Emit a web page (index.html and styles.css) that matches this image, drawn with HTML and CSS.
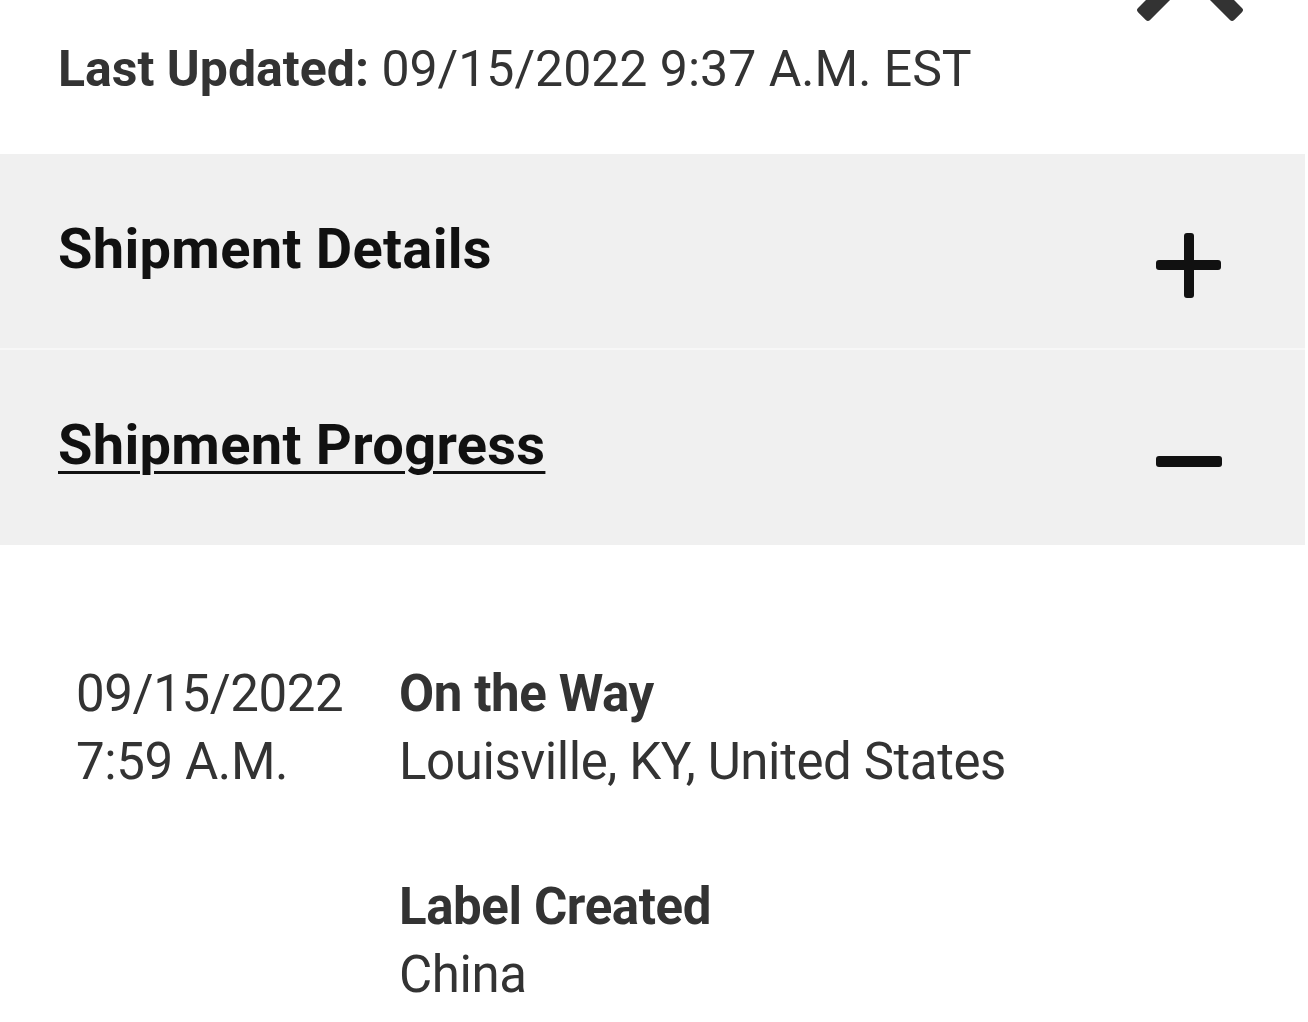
FILE: index.html
```html
<!DOCTYPE html>
<html>
<head>
    <title>Shipment Tracking</title>
    <link rel="stylesheet" href="styles.css">
</head>
<body>
    <div class="page">
        <div class="top">
            <svg class="close-icon" width="140" height="30" viewBox="1120 0 140 30">
                <rect x="-8" y="-8.5" width="76" height="17" rx="3" transform="translate(1190,-32) rotate(135)" />
                <rect x="-8" y="-8.5" width="76" height="17" rx="3" transform="translate(1190,-32) rotate(45)" />
            </svg>
            <p class="updated"><b>Last Updated:</b> 09/15/2022 9:37 A.M. EST</p>
        </div>

        <div class="accordion">
            <div class="acc-row">
                <h2 class="acc-title">Shipment Details</h2>
                <svg class="acc-icon" width="66" height="66" viewBox="0 0 66 66">
                    <rect x="28" y="0" width="10" height="65" rx="3" />
                    <rect x="0" y="27" width="65" height="10" rx="3" />
                </svg>
            </div>
            <div class="acc-row open">
                <h2 class="acc-title"><u>Shipment Progress</u></h2>
                <svg class="acc-icon" width="66" height="66" viewBox="0 0 66 66">
                    <rect x="0" y="27" width="66" height="11" rx="3" />
                </svg>
            </div>
        </div>

        <div class="progress">
            <div class="event">
                <div class="when">09/15/2022<br>7:59 A.M.</div>
                <div class="what">
                    <div class="status">On the Way</div>
                    <div>Louisville, KY, United States</div>
                </div>
            </div>
            <div class="event">
                <div class="when"></div>
                <div class="what">
                    <div class="status">Label Created</div>
                    <div>China</div>
                </div>
            </div>
        </div>
    </div>
</body>
</html>
```

FILE: styles.css
```css
body {
    margin: 0;
    background: #fff;
    font-family: Roboto, "Noto Sans", sans-serif;
    color: #333;
}
.page {
    width: 1305px;
}
.top {
    position: relative;
    height: 154px;
}
.close-icon {
    position: absolute;
    top: 0;
    left: 1120px;
    fill: #333;
}
.updated {
    margin: 0;
    padding: 39px 0 0 58px;
    font-size: 50px;
    line-height: 60px;
    letter-spacing: 0;
}
.updated b {
    font-weight: 700;
}
.accordion {
    background: #f0f0f0;
}
.acc-row {
    display: flex;
    justify-content: space-between;
    align-items: flex-start;
    height: 194px;
    padding: 0 83px 0 58px;
    box-sizing: border-box;
}
.acc-row + .acc-row {
    border-top: 2px solid #f7f7f7;
    height: 197px;
}
.acc-title {
    margin: 0;
    padding-top: 62px;
    font-size: 56px;
    line-height: 67px;
    font-weight: 700;
    color: #111;
    letter-spacing: 0.3px;
}
.acc-title u {
    text-decoration-thickness: 3px;
    text-underline-offset: 7px;
}
.acc-icon {
    margin-top: 79px;
    fill: #111;
}
.progress {
    padding: 115px 0 0 76px;
}
.event {
    display: flex;
    font-size: 51px;
    line-height: 68px;
    letter-spacing: -0.4px;
    margin-bottom: 77px;
}
.when {
    width: 323px;
}
.status {
    font-weight: 700;
}
```
